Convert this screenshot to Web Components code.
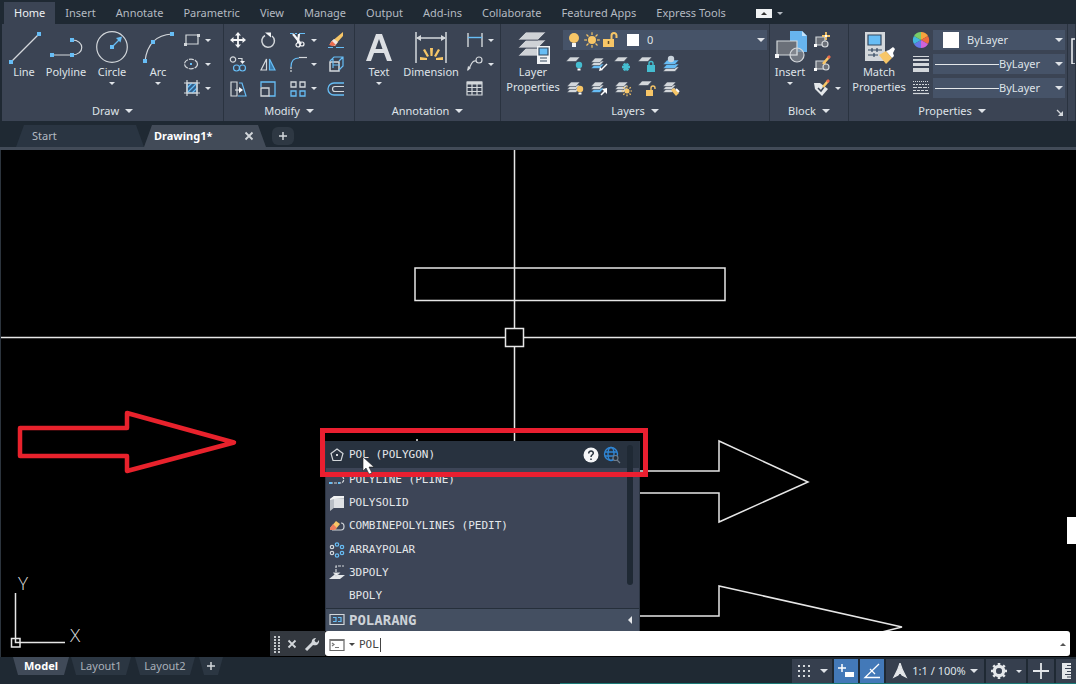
<!DOCTYPE html>
<html lang="en">
<head>
<meta charset="utf-8">
<title>Drawing1 - CAD</title>
<style>
    html, body {
        height: 100%;
        margin: 0;
    }
    body {
        --bar: #1f2933;
        --panel: #3b4454;
        --line: #2a3340;
        --text: #dfe3e8;
        background: var(--bar);
        color: var(--text);
        font-family: "Noto Sans", "Open Sans", sans-serif;
        font-size: 11px;
        line-height: 16px;
        overflow: hidden;
    }
</style>
</head>
<body>
<cad-app></cad-app>

<script>
    const sheet = (x, y, w, fill = '#d3d7db') => `<path d="M${x + 4} ${y}h${w - 4}l-4 4.500h-${w - 4}z" fill="${fill}" stroke="#3b4454" stroke-width=".6"/>`;
    const sheets = (mid = '#d3d7db') => sheet(1, 9, 13, mid) + sheet(1, 6, 13) + sheet(1, 3, 13);
    const bulb = (x, y, c) => `<circle cx="${x}" cy="${y}" r="3.200" fill="${c}" stroke="none"/><path d="M${x - 1.500} ${y + 3.500}h3v2h-3z" fill="#fff" stroke="none"/>`;
    const sun = (x, y, r) => {
        let rays = '';
        for (let i = 0; i < 8; i++) {
            rays += `<path d="M${x} ${y - r - 1}v-${r * 0.7}" transform="rotate(${i * 45} ${x} ${y})"/>`;
        }
        return `<circle cx="${x}" cy="${y}" r="${r}" fill="#f7c667" stroke="none"/><g stroke="#f7c667" stroke-width="1.200">${rays}</g>`;
    };
    const dot = (x, y) => `<path d="M${x - 2} ${y - 2}h4v4h-4z" fill="#67bdf5" stroke="none"/>`;

    // [size, markup]; strokes default to light grey
    const ICONS = {
        line: [34, `<path d="M4 32L32 4"/>${dot(4, 32)}${dot(32, 4)}`],
        polyline: [34, `<path d="M3 25h20c13 0 13-15 0-15" />${dot(3, 25)}${dot(23, 25)}${dot(23, 10)}`],
        circle: [34, `<circle cx="17" cy="17" r="15.300"/><path d="M17 17l7-7" stroke="#67bdf5"/><path d="M27 6.500l-1.500 6-4.500-4.500z" fill="#67bdf5" stroke="none"/>${dot(17, 17)}`],
        arc: [34, `<path d="M4 31C6 15 14 5 31 4"/>${dot(4, 31)}${dot(12, 12)}${dot(31, 4)}`],
        rect: [18, `<path d="M3 4h12v9H3z"/><path d="M1 12h3v3H1zM14 3h3v3h-3z" fill="#d3d7db" stroke="none"/>`],
        ellipse: [18, `<ellipse cx="8" cy="9" rx="6.500" ry="4.800" stroke-dasharray="5 1"/><path d="M7 8h2v2H7z" fill="#67bdf5" stroke="none"/>`],
        hatch: [18, `<path d="M4 4h10v10H4z" fill="#315f8b"/><path d="M4 9l5-5M4 14L14 4M9 14l5-5" stroke="#67bdf5"/><path d="M4 1v16M14 1v16M1 4h16M1 14h16"/>`],
        move: [18, `<path d="M9 3v12M3 9h12" stroke-width="1.800" stroke="#f4f5f7"/><path d="M9 1l3 3.500H6zM9 17l3-3.500H6zM1 9l3.500-3v6zM17 9l-3.500-3v6z" fill="#f4f5f7" stroke="none"/>`],
        rotate: [18, `<path d="M6 4.500a6.300 6.300 0 1 0 7 .5" stroke-width="1.500"/><path d="M6 1.500h6v5z" fill="#f4f5f7" stroke="none"/>`],
        trim: [18, `<path d="M1 2.500h3M6 2.500h2M10 2.500h6" stroke="#67bdf5"/><path d="M4 3l8 10M10 3L9 12" stroke-width="2.200" stroke="#f4f5f7"/><circle cx="13" cy="13" r="2" stroke="#f4f5f7"/><circle cx="9" cy="14" r="2" stroke="#f4f5f7"/>`],
        erase: [18, `<path d="M16 1v4l-8 9-4-3z" fill="#f7c667" stroke="none"/><path d="M7 8l4 3-3 4-5-1c0-3 2-4 4-6z" fill="#f3e4dd" stroke="none"/><path d="M5 10l4 4-3 1-4-1z" fill="#ec6a4d" stroke="none"/><path d="M1 16.500h5M9 16.500h8" stroke="#67bdf5"/>`],
        copy: [18, `<circle cx="4" cy="4.500" r="2.700"/><path d="M9 3.500h4v3"/><path d="M11 6h5l-2.500 3z" fill="#f4f5f7" stroke="none"/><g stroke="#67bdf5"><circle cx="7.500" cy="13" r="3"/><circle cx="13.500" cy="13" r="3"/></g>`],
        mirror: [18, `<path d="M7.500 4v11H2z"/><path d="M10.500 4v11H16z" fill="#397cae" stroke="#67bdf5"/>`],
        fillet: [18, `<path d="M2 17v-6" stroke="#d3d7db" stroke-dasharray="2 1"/><path d="M2 12c0-6 3-9 8-9" stroke="#67bdf5"/><path d="M10 2.500h8"/>`],
        solid: [18, `<path d="M3 7h9v9H3z" stroke-width="1.500"/><path d="M3 6l4-4h9v9l-4 4M16 2l-4 4M6 4v9M6 10h7" stroke="#67bdf5"/>`],
        stretch: [18, `<path d="M2 2h6v14H2z"/><path d="M6 10h6" /><path d="M10 7l4 3-4 3z" fill="#fff" stroke="none"/><path d="M10 3l3 0 4 13H9" stroke="#67bdf5"/>`],
        scale: [18, `<path d="M2 7V2h14v14h-6" stroke="#67bdf5" stroke-width="1.300"/><path d="M2 8h8v8H2z" stroke-width="1.300"/>`],
        array: [18, `<path d="M2 2h5v5H2zM11 2h5v5h-5z" stroke-width="1.300"/><path d="M2 11h5v5H2zM11 11h5v5h-5z" stroke="#67bdf5" stroke-width="1.300"/>`],
        offset: [18, `<path d="M17 3H7a5.500 5.500 0 0 0 0 12h10" stroke="#67bdf5" stroke-width="1.300"/><path d="M17 6.500H8a2.500 2.500 0 0 0 0 5h9"/>`],
        text: [34, `<path d="M4 31L14 4h6l10 27h-5l-3-8h-10l-3 8z M13.500 19h7L17 9z" fill="#dcdfe3" fill-rule="evenodd" stroke="none"/>`],
        dim: [34, `<path d="M2 2v31M32 2v31M3 8h28" stroke-width="1.500"/><path d="M2 8l5-3v6zM32 8l-5-3v6z" fill="#d3d7db" stroke="none"/><g fill="#f7c667" stroke="none"><path d="M16 18h3l-.5 8h-2zM9 20l2-1 4 7-2 1zM26 20l-2-1-4 7 2 1zM6 27l7 1v2H6zM29 27l-7 1v2h7z"/></g>`],
        linear: [18, `<path d="M2 2v14M16 2v14" stroke-width="1.400"/><path d="M2 6.500h14" stroke="#67bdf5" stroke-width="1.400"/>`],
        leader: [18, `<circle cx="13" cy="5" r="3"/><path d="M10 6c-5-1-5 6-8 9"/><path d="M1 16l1-5 3 2z" fill="#d3d7db" stroke="none"/>`],
        table: [18, `<path d="M1 3h15v13H1z"/><path d="M1 4h15" stroke-width="3"/><path d="M1 8.500h15M1 12.500h15M6 4v12M11 4v12"/>`],
        layerprop: [34, `<g stroke="#3b4454" stroke-width=".7" fill="#cfd2d6"><path d="M10 18h20l-8 8H2z"/><path d="M10 10h20l-8 8H2z"/><path d="M10 2h20l-8 8H2z"/></g><path d="M21 16h13v18H21z" fill="#f1f3f5" stroke="none"/><path d="M23 18h9v7h-9z" fill="#67bdf5" stroke="#33485f"/><path d="M24 28h7M24 31h7" stroke="#33485f"/>`],
        laybulb: [18, sheet(0, 2, 14) + bulb(13, 10, '#45bdd0')],
        layiso: [18, sheets('#67bdf5') + `<path d="M17 9l-5 5" stroke="#fff" stroke-width="1.500"/><path d="M9 16l1-4 3 3z" fill="#fff" stroke="none"/>`],
        layfreeze: [18, sheet(0, 2, 14) + `<path d="M8 12h8M10 8.500l4 7M14 8.500l-4 7" stroke="#45bdd0" stroke-width="2.600"/>`],
        laylock: [18, sheet(0, 2, 14) + `<path d="M9 10h8v7H9z" fill="#45bdd0" stroke="none"/><path d="M11 10V8.500a2 2 0 0 1 4 0V10" stroke="#45bdd0" stroke-width="1.400"/>`],
        laycur: [18, sheet(1, 12, 16) + sheet(1, 9, 16, '#67bdf5') + sheet(1, 5, 16, '#67bdf5') + `<circle cx="9" cy="4" r="3.200" fill="#c9d3dc" stroke="none"/>`],
        layon: [18, sheets() + bulb(14, 10, '#f7c667')],
        layuniso: [18, sheets('#67bdf5') + `<path d="M11 16l4-4" stroke="#fff" stroke-width="1.600"/><path d="M17 9v6l-5-5z" fill="#fff" stroke="none"/>`],
        laythaw: [18, sheets() + sun(13, 12, 2.500)],
        layunlock: [18, sheet(0, 2, 14) + `<path d="M8 11h7v6H8z" fill="#f7c667" stroke="none"/><path d="M13 11V9a2 2 0 0 1 4 0v1" stroke="#f7c667" stroke-width="1.400"/>`],
        laymatch: [18, sheets() + `<path d="M9 11l3-2 5 5-3 3z" fill="#f7c667" stroke="none"/><path d="M14 10l3 3" stroke="#fff" stroke-width="2"/>`],
        bulb: [18, `<circle cx="9" cy="7" r="5" fill="#f7c667" stroke="none"/><path d="M7 12h4v4H7z" fill="#f4f5f7" stroke="none"/>`],
        sun: [18, sun(9, 9, 4)],
        unlock: [18, `<path d="M2 8h11v8H2z" fill="#f7c667" stroke="none"/><path d="M10.500 8V4.500a2.500 2.500 0 0 1 5 0V7" stroke="#f7c667" stroke-width="2"/><path d="M7.500 10v3" stroke="#5b4a2a" stroke-width="1.500"/>`],
        insert: [34, `<path d="M17 1h12l5 5v16H17z" fill="#67b4ee" stroke="none"/><path d="M29 1v5h5z" fill="#c4e2fa" stroke="none"/><path d="M4 11h20v14H4z" fill="#6b7079"/><path d="M2 24h4v4H2z" fill="#f4f5f7" stroke="none"/><circle cx="24" cy="25" r="7" fill="#8a8f96" fill-opacity=".7"/><path d="M24 18v7h-7" />`],
        blocknew: [18, `<path d="M3 6h9v8H3z" fill="#6b7079"/><path d="M1 13h3v3H1z" fill="#fff" stroke="none"/><circle cx="12" cy="13" r="3" fill="#6b7079"/><path d="M13 1v8M9 5h8" stroke="#f7c667" stroke-width="1.800"/><path d="M12 4h2v2h-2z" fill="#fff" stroke="none"/>`],
        blockedit: [18, `<path d="M3 6h9v8H3z" fill="#6b7079"/><path d="M1 13h3v3H1z" fill="#fff" stroke="none"/><circle cx="13" cy="12" r="3" fill="#6b7079"/><path d="M10 9l6-7" stroke="#f7c667" stroke-width="2.600"/><path d="M15 3l2-2" stroke="#ec6a4d" stroke-width="2.600"/>`],
        attedit: [18, `<path d="M1 4h6l8 6-6 7-7-7z" fill="#e4e7ea" stroke="none"/><path d="M5 9l3 3 3-4" stroke="#3b4454" stroke-width="1.500"/><path d="M10 8l5-6" stroke="#f7c667" stroke-width="2.600"/><path d="M14 3l2-2" stroke="#ec6a4d" stroke-width="2.600"/>`],
        match: [34, `<path d="M3 2h20v29H3z" fill="#d3d7db" stroke="none"/><path d="M6 5h13v10H6z" fill="#67bdf5" stroke="#33485f"/><path d="M6 20h14M6 25h10M10 18v4M15 18v4M12 23v4" stroke="#33485f"/><path d="M17 25l7-4 6 7-6 6z" fill="#f7c667" stroke="none"/><path d="M24 21l3-1 4-3 2 2-2 4 1 3-2 2z" fill="#fff" stroke="none"/>`],
        wheel: [18, `<g stroke="none"><path d="M9 9V1a8 8 0 0 1 7 4z" fill="#f7a23c"/><path d="M9 9l7-4a8 8 0 0 1 0 8z" fill="#ef6a3d"/><path d="M9 9l7 4a8 8 0 0 1-7 4z" fill="#cf62d8"/><path d="M9 9v8a8 8 0 0 1-7-4z" fill="#6478e8"/><path d="M9 9l-7 4a8 8 0 0 1 0-8z" fill="#42b7dd"/><path d="M9 9L2 5a8 8 0 0 1 7-4z" fill="#79cc68"/></g>`],
        weight: [18, `<path d="M1 1.500h16" stroke-width="1"/><path d="M1 5h16" stroke-width="2"/><path d="M1 9.500h16" stroke-width="3"/><path d="M1 15h16" stroke-width="4"/>`],
        ltype: [18, `<path d="M1 2.500h16" stroke-dasharray="1 1"/><path d="M1 5.500h16" stroke-dasharray="2 1"/><path d="M1 8.500h16" stroke-dasharray="4 1"/><path d="M1 11.500h16" stroke-dasharray="3 1"/><path d="M1 14.500h16"/>`],
        group: [34, `<path d="M1 9h30v25H1z" stroke="#f4f5f7" stroke-width="1.500"/>`],
        launcher: [10, `<path d="M2 2l4 4" stroke-width="1.300"/><path d="M8 3v5H3z" fill="#d3d7db" stroke="none"/>`],
        close: [10, `<path d="M1.500 1.500l7 7M8.500 1.500l-7 7" stroke-width="1.800"/>`],
        plus: [10, `<path d="M5 1v8M1 5h8" stroke-width="1.500"/>`],
        polygon: [16, `<path d="M8 2l6 4.500-2 7H4l-2-7z"/><path d="M7 7h2v2H7z" fill="#d3d7db" stroke="none"/>`],
        pline: [16, `<path d="M1 11h10c5 0 5-7 0-7" stroke-dasharray="3 1"/><path d="M0 10h3v2H0zM9 10h2v2H9z" fill="#67bdf5" stroke="none"/>`],
        polysolid: [16, `<path d="M1 4l4-3h10v11H6l-5 4z" fill="#b9bec5" stroke="none"/><path d="M5 4h10v9H5z" fill="#dfe1e4" stroke="none"/><path d="M1 4l4-3h10v2l-10 1-4 1z" fill="#f2f3f4" stroke="none"/>`],
        pedit: [16, `<path d="M3 12h9c4 0 4-7 0-7"/><path d="M1 10l6-7 4 3-5 6z" fill="#f7c667" stroke="none"/><path d="M1 10l3-4 4 4-3 2H1z" fill="#ec7c5d" stroke="none"/>`],
        polar: [16, `<g stroke="#67bdf5"><circle cx="8" cy="2.500" r="1.700"/><circle cx="13" cy="5" r="1.700"/><circle cx="13" cy="11" r="1.700"/><circle cx="8" cy="13.500" r="1.700"/></g><circle cx="3" cy="5" r="1.700"/><circle cx="3" cy="11" r="1.700"/>`],
        poly3d: [16, `<path d="M0 14l5-4h11l-5 4z" fill="#e4e7ea" stroke="none"/><path d="M7 11V1h8" stroke-dasharray="3 1"/><path d="M5 8l2 3 3-3z" fill="#fff"/>`],
        sysvar: [16, `<path d="M1 2.500h14v10H1z" /><path d="M4 5.500h3v4H4M9 5.500h3v4H9" stroke="#67bdf5"/>`],
        help: [16, `<circle cx="8" cy="8" r="7.500" fill="#f4f5f7" stroke="none"/><path d="M5.700 6.500c0-3.500 4.800-3 4.600-.3C10.200 7.800 8 7.800 8 10M8 11.500v1.500" stroke="#29333f" stroke-width="1.500"/>`],
        globe: [18, `<g stroke="#2f86d6" stroke-width="1.400"><circle cx="8" cy="8" r="6.500"/><ellipse cx="8" cy="8" rx="3" ry="6.500"/><path d="M2 6h12M2 10h12"/></g><circle cx="12.500" cy="12" r="2.500" fill="#25303c" stroke="#6f7b88"/><path d="M14 14l3 3" stroke="#6f7b88"/>`],
        wrench: [16, `<path d="M2 14l7-7" stroke-width="3"/><path d="M8 8c-1-4 1-6 4-6L10.500 4.500l1 1.500 1.500.5L15 4c.5 4-2 6-6 5z" fill="#d3d7db" stroke="none"/>`],
        prompt: [16, `<path d="M1 2.500h14v11H1z" stroke="#666"/><path d="M1 3h14" stroke="#777" stroke-width="2"/><path d="M3 6l2 1.500L3 9M6 10.500h4" stroke="#777"/>`],
        grid: [16, `<path d="M2 2h2v2H2zM7 2h2v2H7zM12 2h2v2h-2zM2 7h2v2H2zM7 7h2v2H7zM12 7h2v2h-2zM2 12h2v2H2zM7 12h2v2H7zM12 12h2v2h-2z" fill="#d3d7db" stroke="none"/>`],
        dyn: [18, `<path d="M5 2v8M1 6h8" stroke="#fff" stroke-width="1.500"/><path d="M8 10h9v5H8z" fill="#fff" stroke="none"/>`],
        angle: [18, `<path d="M16 2L2 15.500h15" stroke="#fff" stroke-width="1.300"/><path d="M7 7l5 5" stroke="#fff"/>`],
        annoscale: [16, `<path d="M8 0c1 4 2 7 6 14l-4-2-2-3-2 3-4 2C6 7 7 4 8 0z" fill="#e4e7ea" stroke="#e4e7ea"/>`],
        gear: [18, `<circle cx="9" cy="9" r="4.500" stroke-width="3.500" stroke="#e4e7ea"/><path d="M9 1v16M1 9h16M3.300 3.300l2 2M12.700 12.700l2 2M14.700 3.300l-2 2M5.300 12.700l-2 2" stroke="#e4e7ea" stroke-width="2.600"/><circle cx="9" cy="9" r="3" fill="#3b4454" stroke="none"/>`],
        cross: [18, `<path d="M9 1v16M1 9h16" stroke="#e4e7ea" stroke-width="1.800"/>`],
        ruler: [18, `<path d="M5 1h9v16H5z" fill="#e4e7ea" stroke="none"/><path d="M10 3.500h4M8 6.500h6M10 9.500h4M8 12.500h6M10 15h4" stroke="#3b4454"/>`]
    };

    const BASE = `
        :host { box-sizing: border-box; }
        *, *::before, *::after { box-sizing: border-box; }
        button, select, input {
            margin: 0;
            padding: 0;
            border: 0;
            background: none;
            color: inherit;
            font: inherit;
        }
    `;

    class CadElement extends HTMLElement {
        connectedCallback() {
            if (this.shadowRoot) return;
            const shadow = this.attachShadow({ mode: 'open' });
            shadow.innerHTML = `<style>${BASE}${this.css()}</style>${this.html()}`;
        }
        css() { return ''; }
        html() { return '<slot></slot>'; }
    }

    class CadIcon extends CadElement {
        css() {
            return `:host { display: inline-flex; flex: none; } svg { display: block; }`;
        }
        html() {
            const [size, body] = ICONS[this.getAttribute('name')];
            return `<svg width="${size}" height="${size}" viewBox="0 0 ${size} ${size}" fill="none" stroke="#d3d7db" stroke-width="1.200" aria-hidden="true">${body}</svg>`;
        }
    }

    class DropCaret extends CadElement {
        css() {
            return `
            :host {
                display: inline-block;
                flex: none;
                border: 3px solid transparent;
                border-top-color: currentColor;
                border-bottom: 0;
            }
            :host([large]) { border-width: 4px 4px 0; }
            `;
        }
        html() { return ''; }
    }

    // Large ribbon button: picture, label of one or two lines, optional caret
    class RibbonTool extends CadElement {
        css() {
            return `
            :host { display: block; flex: none; }
            button {
                display: flex;
                flex-direction: column;
                align-items: center;
                width: 100%;
                padding-top: 2px;
            }
            .label { text-align: center; line-height: 15px; }
            drop-caret { margin-top: 3px; }
            `;
        }
        html() {
            return `
            <button type="button" aria-label="${this.getAttribute('hint') || this.textContent}">
                <cad-icon name="${this.getAttribute('icon')}"></cad-icon>
                <span class="label"><slot></slot></span>
                ${this.hasAttribute('menu') ? '<drop-caret></drop-caret>' : ''}
            </button>`;
        }
    }

    class SmallTool extends CadElement {
        css() {
            return `
            :host { display: flex; align-items: center; height: 24px; }
            button { display: grid; place-items: center; height: 24px; }
            .main { width: 24px; }
            .more { width: 8px; }
            `;
        }
        html() {
            const icon = this.getAttribute('icon');
            return `
            <button class="main" type="button" aria-label="${icon}"><cad-icon name="${icon}"></cad-icon></button>
            ${this.hasAttribute('menu') ? `<button class="more" type="button" aria-label="${icon} options"><drop-caret></drop-caret></button>` : ''}`;
        }
    }

    class RibbonPanel extends CadElement {
        css() {
            return `
            :host {
                display: flex;
                flex-direction: column;
                min-width: 0;
                border-right: 1px solid var(--line);
                overflow: hidden;
            }
            .body { display: flex; flex: 1; padding-top: 4px; }
            .title {
                display: flex;
                align-items: center;
                height: 20px;
            }
            .title .name {
                display: flex;
                flex: 1;
                justify-content: center;
                align-items: center;
                gap: 6px;
            }
            .launch { margin-right: 2px; height: 10px; }
            `;
        }
        html() {
            const title = this.getAttribute('title-text');
            return `
            <div class="body"><slot></slot></div>
            ${title ? `<div class="title">
                <button class="name" type="button">${title}<drop-caret large></drop-caret></button>
                ${this.hasAttribute('launcher') ? '<button class="launch" type="button" aria-label="Dialog"><cad-icon name="launcher"></cad-icon></button>' : ''}
            </div>` : ''}`;
        }
    }

    class ComboBox extends CadElement {
        css() {
            return `
            :host {
                display: flex;
                align-items: center;
                height: 20px;
                padding: 0 2px;
                background: #465368;
            }
            label { display: flex; flex: 1; align-items: center; min-width: 0; }
            select { appearance: none; flex: 1; height: 20px; min-width: 0; }
            :host([stroke]) label::before {
                content: "";
                flex: 1;
                border-top: 1px solid #e4e7ea;
            }
            :host([stroke]) select { flex: none; width: 56px; }
            `;
        }
        html() {
            return `
            <label><slot></slot>
                <select aria-label="${this.getAttribute('hint')}"><option>${this.getAttribute('value')}</option></select>
            </label>
            <drop-caret large></drop-caret>`;
        }
    }

    class RibbonTabs extends CadElement {
        css() {
            return `
            :host {
                display: flex;
                align-items: flex-end;
                height: 24px;
                padding-left: 4px;
                color: #b4bac2;
            }
            button { height: 22px; padding: 0 10px; white-space: nowrap; }
            [aria-selected="true"] { background: var(--panel); color: #eef0f3; }
            .minimize {
                display: flex;
                align-items: center;
                gap: 5px;
                margin-left: 20px;
                padding: 0;
            }
            .chip {
                display: grid;
                place-items: center;
                width: 16px;
                height: 9px;
                background: #f1f3f5;
            }
            .chip::before {
                content: "";
                border: 3px solid transparent;
                border-bottom-color: #333;
                border-top: 0;
            }
            `;
        }
        html() {
            const tabs = ['Home', 'Insert', 'Annotate', 'Parametric', 'View', 'Manage', 'Output', 'Add-ins', 'Collaborate', 'Featured Apps', 'Express Tools'];
            return tabs.map((t, i) => `<button type="button" role="tab" aria-selected="${i === 0}">${t}</button>`).join('') +
                `<button class="minimize" type="button" aria-label="Minimize ribbon"><span class="chip"></span><drop-caret></drop-caret></button>`;
        }
    }

    class CadRibbon extends CadElement {
        css() {
            return `
            :host {
                display: grid;
                grid-template-columns: 222fr 131fr 146fr 269fr 79fr 219fr 8fr;
                height: 97px;
                margin-left: 2px;
                background: var(--panel);
            }
            .w40 { width: 40px; }
            .w44 { width: 44px; }
            .w48 { width: 48px; }
            .w56 { width: 56px; margin-right: 4px; }
            .w60 { width: 60px; }
            .first { margin-left: 2px; }
            .modify {
                display: grid;
                grid-template-columns: 24px 24px 32px 24px;
                column-gap: 6px;
                padding-left: 2px;
            }
            .rows { display: flex; flex-direction: column; flex: 1; min-width: 0; }
            .row { display: flex; align-items: center; height: 24px; }
            .row combo-box { flex: 1; margin-right: 2px; }
            .swatch {
                width: 12px;
                height: 12px;
                margin: 0 8px;
                background: #fff;
            }
            .swatch.big { width: 16px; height: 16px; }
            `;
        }
        html() {
            const small = names => names.split(' ').map(n => {
                const menu = n.endsWith('+');
                return `<small-tool icon="${n.replace('+', '')}" ${menu ? 'menu' : ''}></small-tool>`;
            }).join('');
            return `
            <ribbon-panel title-text="Draw">
                <ribbon-tool class="w40 first" icon="line">Line</ribbon-tool>
                <ribbon-tool class="w44" icon="polyline">Polyline</ribbon-tool>
                <ribbon-tool class="w48" icon="circle" menu>Circle</ribbon-tool>
                <ribbon-tool class="w44" icon="arc" menu>Arc</ribbon-tool>
                <div class="rows">${small('rect+ ellipse+ hatch+')}</div>
            </ribbon-panel>
            <ribbon-panel title-text="Modify">
                <div class="modify">${small('move rotate trim+ erase copy mirror fillet+ solid stretch scale array+ offset')}</div>
            </ribbon-panel>
            <ribbon-panel title-text="Annotation">
                <ribbon-tool class="w48" icon="text" menu>Text</ribbon-tool>
                <ribbon-tool class="w56" icon="dim">Dimension</ribbon-tool>
                <div class="rows">${small('linear+ leader+ table')}</div>
            </ribbon-panel>
            <ribbon-panel title-text="Layers">
                <ribbon-tool class="w60 first" icon="layerprop">Layer<br>Properties</ribbon-tool>
                <div class="rows">
                    <div class="row">
                        <combo-box value="0" hint="Layer">
                            <cad-icon name="bulb"></cad-icon>
                            <cad-icon name="sun"></cad-icon>
                            <cad-icon name="unlock"></cad-icon>
                            <span class="swatch"></span>
                        </combo-box>
                    </div>
                    <div class="row">${small('laybulb layiso layfreeze laylock laycur')}</div>
                    <div class="row">${small('layon layuniso laythaw layunlock laymatch')}</div>
                </div>
            </ribbon-panel>
            <ribbon-panel title-text="Block">
                <ribbon-tool class="w40" icon="insert" menu>Insert</ribbon-tool>
                <div class="rows">${small('blocknew blockedit attedit+')}</div>
            </ribbon-panel>
            <ribbon-panel title-text="Properties" launcher>
                <ribbon-tool class="w60" icon="match">Match<br>Properties</ribbon-tool>
                <div class="rows">
                    <div class="row">${small('wheel')}<combo-box value="ByLayer" hint="Object color"><span class="swatch big"></span></combo-box></div>
                    <div class="row">${small('weight')}<combo-box stroke value="ByLayer" hint="Lineweight"></combo-box></div>
                    <div class="row">${small('ltype')}<combo-box stroke value="ByLayer" hint="Linetype"></combo-box></div>
                </div>
            </ribbon-panel>
            <ribbon-panel>
                <ribbon-tool class="w40" icon="group" hint="Group"></ribbon-tool>
            </ribbon-panel>`;
        }
    }

    class FileTabs extends CadElement {
        css() {
            return `
            :host {
                display: flex;
                align-items: flex-end;
                height: 29px;
                padding: 0 0 0 16px;
                border-bottom: 3px solid #424b58;
            }
            .tab {
                display: flex;
                align-items: center;
                height: 22px;
                padding: 0 16px;
                background: #2a3542;
                color: #b4bac2;
                clip-path: polygon(8px 0, calc(100% - 8px) 0, 100% 100%, 0 100%);
            }
            .start { width: 128px; }
            .active {
                justify-content: space-between;
                width: 122px;
                padding: 0 12px 0 10px;
                background: #424b58;
                color: #fff;
                font-weight: bold;
            }
            .close { height: 10px; line-height: 10px; }
            .new {
                display: grid;
                place-items: center;
                width: 22px;
                height: 18px;
                margin: 0 0 2px 6px;
                border-radius: 6px;
                background: #2e3843;
            }
            `;
        }
        html() {
            return `
            <button class="tab start" type="button">Start</button>
            <div class="tab active">
                <button type="button">Drawing1*</button>
                <button class="close" type="button" aria-label="Close"><cad-icon name="close"></cad-icon></button>
            </div>
            <button class="new" type="button" aria-label="New drawing"><cad-icon name="plus"></cad-icon></button>`;
        }
    }

    class ModelSpace extends CadElement {
        css() {
            return `
            :host {
                display: block;
                position: relative;
                background: #000;
                border-left: 1px solid #2c343d;
                overflow: hidden;
            }
            .drawing { position: absolute; inset: 0; width: 100%; height: 100%; }
            text { font: 19px "Open Sans", sans-serif; font-weight: 300; }
            .grip {
                position: absolute;
                top: 367px;
                right: 0;
                width: 9px;
                height: 27px;
                background: #fff;
            }
            command-line { position: absolute; left: 269px; right: 6px; bottom: 1px; }
            `;
        }
        html() {
            return `
            <svg class="drawing" fill="none" stroke="#e6e6e6" stroke-width="1.500">
                <path d="M414 118h310v32.500H414z"/>
                <path d="M513.500 0v178M513.500 197v120"/>
                <path d="M0 187.500h504M523 187.500h3000"/>
                <path d="M504.500 178.500h18v18h-18z"/>
                <path d="M600 321h118v-30l89 41-89 40v-29H600"/>
                <path d="M600 466h118v-30l183 41-20 5"/>
                <path d="M416 289v3"/>
                <!-- UCS icon -->
                <path d="M14.500 443v49.500H64M10.500 488.500h8.500v8.500h-8.500z"/>
                <g fill="#d8d8d8" stroke="none" text-anchor="middle">
                    <text x="22" y="440">Y</text>
                    <text x="74" y="492">X</text>
                </g>
                <path d="M19 278h107v-15l107 29.500L126 321v-15H19z" stroke="#e8222c" stroke-width="4.500" stroke-linejoin="round"/>
            </svg>
            <span class="grip"></span>
            <command-line></command-line>`;
        }
    }

    class CommandLine extends CadElement {
        css() {
            return `
            :host {
                display: flex;
                height: 25px;
                font-family: "DejaVu Sans Mono", monospace;
            }
            .handle {
                display: flex;
                align-items: center;
                justify-content: space-between;
                width: 55px;
                padding: 0 5px 0 4px;
                background: #33383f;
            }
            .handle button { height: 16px; display: grid; place-items: center; }
            .dots {
                width: 6px;
                height: 18px;
                background: repeating-linear-gradient(#33383f 0 1px, transparent 1px 3px),
                    linear-gradient(90deg, #c4c8cc 2px, transparent 2px 4px, #c4c8cc 4px);
            }
            .field {
                display: flex;
                flex: 1;
                align-items: center;
                gap: 4px;
                padding: 2px 4px 0;
                border-radius: 3px;
                background: #fff;
                color: #444;
            }
            input {
                flex: 1;
                height: 20px;
                outline: 0;
                background: linear-gradient(#444, #444) 21px 50% / 1px 14px no-repeat;
            }
            .up {
                border: 3px solid transparent;
                border-bottom-color: #555;
                border-top: 0;
            }
            suggest-list { position: absolute; left: 55px; bottom: 100%; width: 315px; }
            `;
        }
        html() {
            return `
            <div class="handle">
                <span class="dots"></span>
                <button type="button" aria-label="Close"><cad-icon name="close"></cad-icon></button>
                <button type="button" aria-label="Customize"><cad-icon name="wrench"></cad-icon></button>
            </div>
            <label class="field">
                <cad-icon name="prompt"></cad-icon>
                <drop-caret></drop-caret>
                <input type="text" value="POL" aria-label="Command" spellcheck="false">
                <span class="up"></span>
            </label>
            <suggest-list></suggest-list>`;
        }
    }

    class SuggestList extends CadElement {
        css() {
            return `
            :host {
                display: block;
                background: #3d4557;
                border: 1px solid #2c3543;
                border-width: 0 1px;
                color: #e4e7ea;
            }
            button {
                display: flex;
                align-items: center;
                gap: 4px;
                width: 100%;
                padding-left: 3px;
            }
            .blank { width: 16px; }
            .first {
                height: 27px;
                padding-right: 18px;
                background: #28323f;
            }
            .first .name { flex: 1; text-align: left; }
            .rest { display: grid; grid-auto-rows: 1fr; height: 140px; }
            .variable {
                height: 23px;
                padding-right: 7px;
                border-top: 1px solid #262f3b;
                background: #444f61;
                color: #cdd2d8;
                font-size: 14px;
                font-weight: bold;
            }
            .variable .name { flex: 1; text-align: left; }
            .left {
                border: 4px solid transparent;
                border-right-color: #e4e7ea;
                border-left: 0;
            }
            .thumb {
                position: absolute;
                top: 4px;
                right: 6px;
                width: 6px;
                height: 140px;
                border-radius: 3px;
                background: #1f2934;
            }
            .callout {
                position: absolute;
                top: -13px;
                left: -6px;
                width: 328px;
                height: 49px;
                border: 5px solid #ea1f30;
                pointer-events: none;
            }
            .pointer { position: absolute; top: 15px; left: 36px; }
            `;
        }
        html() {
            const items = [['pline', 'POLYLINE (PLINE)'], ['polysolid', 'POLYSOLID'], ['pedit', 'COMBINEPOLYLINES (PEDIT)'], ['polar', 'ARRAYPOLAR'], ['poly3d', '3DPOLY'], ['', 'BPOLY']];
            return `
            <button class="first" type="button">
                <cad-icon name="polygon"></cad-icon>
                <span class="name">POL (POLYGON)</span>
                <cad-icon name="help"></cad-icon>
                <cad-icon name="globe"></cad-icon>
            </button>
            <div class="rest">
                ${items.map(([icon, name]) => `<button type="button">${icon ? `<cad-icon name="${icon}"></cad-icon>` : '<span class="blank"></span>'}${name}</button>`).join('')}
            </div>
            <button class="variable" type="button">
                <cad-icon name="sysvar"></cad-icon>
                <span class="name">POLARANG</span>
                <span class="left"></span>
            </button>
            <span class="thumb"></span>
            <span class="callout"></span>
            <svg class="pointer" width="14" height="20" viewBox="0 0 14 20" aria-hidden="true">
                <path d="M1 1v14l3-3 3 6 3-1-3-6h5z" fill="#fff" stroke="#222" stroke-width=".6"/>
            </svg>`;
        }
    }

    class StatusBar extends CadElement {
        css() {
            return `
            :host {
                display: flex;
                justify-content: space-between;
                height: 27px;
                background: linear-gradient(#1b7a76, #1b7a76) 100% 100% / 48% 1px no-repeat;
            }
            nav { display: flex; padding-left: 13px; }
            nav button {
                height: 18px;
                width: 60px;
                margin-right: 4px;
                background: #2b3642;
                color: #a9b0b9;
                clip-path: polygon(0 0, 100% 0, calc(100% - 5px) 100%, 5px 100%);
            }
            nav .active {
                width: 56px;
                margin-right: 2px;
                background: #404a58;
                color: #fff;
                font-weight: bold;
            }
            nav .new { display: grid; place-items: center; width: 24px; }
            .tools { display: flex; gap: 2px; padding-top: 2px; }
            .tools button {
                display: flex;
                align-items: center;
                justify-content: center;
                gap: 8px;
                height: 24px;
                min-width: 24px;
                padding: 0 4px;
                background: #363f4e;
            }
            .tools .on { background: #4379b8; padding: 0; }
            .tools .scale { width: 98px; gap: 4px; }
            .tools .wide { width: 40px; }
            .tools .last { min-width: 20px; padding: 0; }
            `;
        }
        html() {
            return `
            <nav>
                <button class="active" type="button">Model</button>
                <button type="button">Layout1</button>
                <button type="button">Layout2</button>
                <button class="new" type="button" aria-label="New layout"><cad-icon name="plus"></cad-icon></button>
            </nav>
            <div class="tools">
                <button class="wide" type="button" aria-label="Snap"><cad-icon name="grid"></cad-icon><drop-caret large></drop-caret></button>
                <button class="on" type="button" aria-label="Dynamic input"><cad-icon name="dyn"></cad-icon></button>
                <button class="on" type="button" aria-label="Polar tracking"><cad-icon name="angle"></cad-icon></button>
                <button class="scale" type="button"><cad-icon name="annoscale"></cad-icon><span>1:1 / 100%</span><drop-caret large></drop-caret></button>
                <button class="wide" type="button" aria-label="Workspace"><cad-icon name="gear"></cad-icon><drop-caret></drop-caret></button>
                <button type="button" aria-label="Annotation monitor"><cad-icon name="cross"></cad-icon></button>
                <button class="last" type="button" aria-label="Units"><cad-icon name="ruler"></cad-icon></button>
            </div>`;
        }
    }

    class CadApp extends CadElement {
        css() {
            return `
            :host { display: flex; flex-direction: column; height: 100vh; }
            model-space { flex: 1; min-height: 0; }
            ribbon-tabs, cad-ribbon, file-tabs, status-bar { flex: none; }
            `;
        }
        html() {
            return `
            <ribbon-tabs></ribbon-tabs>
            <cad-ribbon></cad-ribbon>
            <file-tabs></file-tabs>
            <model-space></model-space>
            <status-bar></status-bar>`;
        }
    }

    customElements.define('cad-icon', CadIcon);
    customElements.define('drop-caret', DropCaret);
    customElements.define('ribbon-tool', RibbonTool);
    customElements.define('small-tool', SmallTool);
    customElements.define('ribbon-panel', RibbonPanel);
    customElements.define('combo-box', ComboBox);
    customElements.define('ribbon-tabs', RibbonTabs);
    customElements.define('cad-ribbon', CadRibbon);
    customElements.define('file-tabs', FileTabs);
    customElements.define('suggest-list', SuggestList);
    customElements.define('command-line', CommandLine);
    customElements.define('model-space', ModelSpace);
    customElements.define('status-bar', StatusBar);
    customElements.define('cad-app', CadApp);
</script>
</body>
</html>
